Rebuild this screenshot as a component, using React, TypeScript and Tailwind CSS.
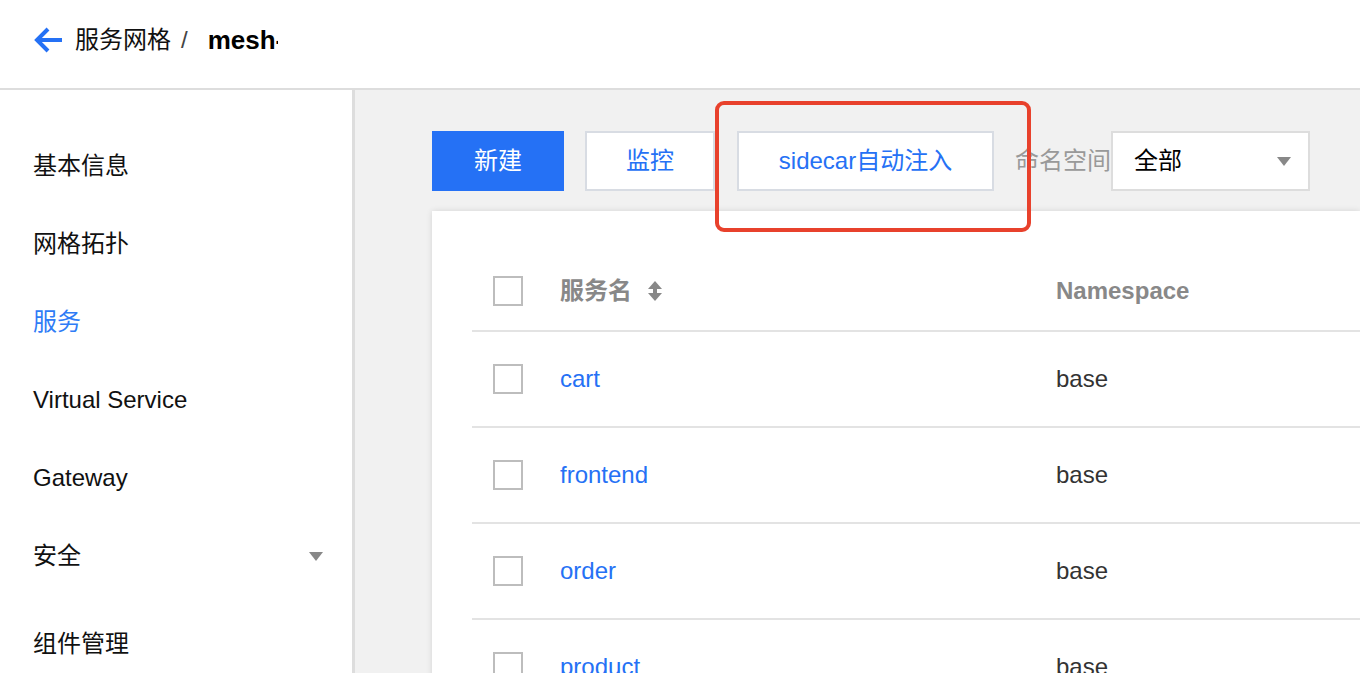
import { Fragment } from "react";

const font = { fontFamily: '"Liberation Sans", "Noto Sans CJK SC", sans-serif' };

const menu = ["基本信息", "网格拓扑", "服务", "Virtual Service", "Gateway", "安全"];
const rows = ["cart", "frontend", "order", "product"];

function Caret({ className }: { className?: string }) {
  return (
    <svg width="14" height="9" viewBox="0 0 14 9" className={className}>
      <path d="M0 0h14L7 9z" fill="#888" />
    </svg>
  );
}

function Checkbox() {
  return <div className="w-[30px] h-[30px] border-2 border-[#bdbdbd] bg-white shrink-0" />;
}

export default function App() {
  return (
    <div className="w-[1360px] h-[673px] overflow-hidden bg-[#f1f1f1] flex flex-col" style={font}>
      {/* top bar */}
      <header className="h-[90px] shrink-0 bg-white border-b-2 border-[#dddddd] flex items-center pl-[34px] pb-[8px]">
        <svg width="29" height="26" viewBox="0 0 29 26" className="mr-[12px]">
          <path d="M28 13H4M14 2L3 13l11 11" fill="none" stroke="#2571f5" strokeWidth="4" />
        </svg>
        <span className="text-[24px] text-[#111]">服务网格</span>
        <span className="text-[24px] text-[#444] ml-[10px]">/</span>
        <span className="text-[26px] font-bold text-black ml-[20px] w-[70px] overflow-hidden whitespace-nowrap">
          mesh-demo
        </span>
      </header>

      <div className="flex flex-1 min-h-0">
        {/* sidebar */}
        <aside className="w-[355px] shrink-0 bg-white border-r-[3px] border-[#dddddd] pt-[37px]">
          {menu.map((m, i) => (
            <div
              key={m}
              className={`h-[78px] flex items-center justify-between pl-[33px] pr-[29px] text-[24px] ${
                i === 2 ? "text-[#2f7cf6]" : "text-[#111]"
              }`}
            >
              <span>{m}</span>
              {m === "安全" && <Caret />}
            </div>
          ))}
          <div className="h-[78px] mt-[10px] flex items-center pl-[33px] text-[24px] text-[#111]">组件管理</div>
        </aside>

        {/* main */}
        <main className="flex-1 pl-[77px] pt-[41px] relative">
          <div className="flex items-center h-[60px]">
            <button className="w-[132px] h-[60px] bg-[#2571f5] text-white text-[24px]">新建</button>
            <button className="ml-[21px] w-[130px] h-[60px] bg-white border-2 border-[#d8dce3] text-[#2571f5] text-[24px]">
              监控
            </button>
            <button className="ml-[22px] w-[257px] h-[60px] bg-white border-2 border-[#d8dce3] text-[#2571f5] text-[24px]">
              sidecar自动注入
            </button>
            <span className="ml-[21px] text-[24px] text-[#999]">命名空间</span>
            <div className="w-[199px] h-[60px] bg-white border-2 border-[#dddddd] flex items-center justify-between pl-[21px] pr-[17px]">
              <span className="text-[24px] text-black">全部</span>
              <Caret />
            </div>
          </div>

          {/* highlight box */}
          <div className="absolute left-[360px] top-[11px] w-[316px] h-[131px] border-[4px] border-[#e8412c] rounded-[9px] pointer-events-none" />

          {/* table card */}
          <div className="mt-[20px] bg-white shadow-[0_0_6px_rgba(0,0,0,0.12)] pt-[40px] pl-[40px] h-[600px]">
            <div className="grid grid-cols-[67px_496px_1fr] items-center h-[81px] border-b-2 border-[#e3e3e3] pl-[21px]">
              <Checkbox />
              <div className="flex items-center gap-[16px] text-[24px] font-bold text-[#888]">
                <span>服务名</span>
                <svg width="14" height="20" viewBox="0 0 14 20">
                  <path d="M7 0L14 8H9v4h5l-7 8-7-8h5V8H0z" fill="#888" />
                </svg>
              </div>
              <span className="text-[24px] font-bold text-[#888]">Namespace</span>
            </div>
            {rows.map((r) => (
              <Fragment key={r}>
                <div className="grid grid-cols-[67px_496px_1fr] items-center h-[96px] border-b-2 border-[#e3e3e3] pl-[21px]">
                  <Checkbox />
                  <span className="text-[24px] text-[#2571f5]">{r}</span>
                  <span className="text-[24px] text-[#333]">base</span>
                </div>
              </Fragment>
            ))}
          </div>
        </main>
      </div>
    </div>
  );
}
